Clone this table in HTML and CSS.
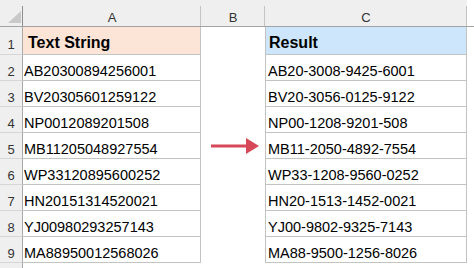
FILE: index.html
```html
<!DOCTYPE html>
<html>
<head>
<meta charset="utf-8">
<link rel="stylesheet" href="styles.css">
</head>
<body>
<div class="sheet">
  <div class="hd corner"><svg class="tri" width="13" height="12" viewBox="0 0 13 12"><polygon points="13,0 13,12 0,12" fill="#c9c9c9"/></svg></div>
  <div class="hd col">A</div>
  <div class="hd col">B</div>
  <div class="hd col">C</div>
  <div class="hd rest"></div>

  <div class="rn first">1</div>
  <div class="cell a first title peach">Text String</div>
  <div class="cell b"></div>
  <div class="cell c first title blue">Result</div>
  <div class="cell r"></div>

  <div class="rn">2</div><div class="cell a">AB20300894256001</div><div class="cell b"></div><div class="cell c">AB20-3008-9425-6001</div><div class="cell r"></div>
  <div class="rn">3</div><div class="cell a">BV20305601259122</div><div class="cell b"></div><div class="cell c">BV20-3056-0125-9122</div><div class="cell r"></div>
  <div class="rn">4</div><div class="cell a">NP0012089201508</div><div class="cell b"></div><div class="cell c">NP00-1208-9201-508</div><div class="cell r"></div>
  <div class="rn">5</div><div class="cell a">MB11205048927554</div><div class="cell b arrow"><svg width="48" height="16" viewBox="0 0 48 16"><rect x="0" y="6.5" width="38" height="3" fill="#d64858"/><polygon points="35,0 48,8 35,16" fill="#d64858"/></svg></div><div class="cell c">MB11-2050-4892-7554</div><div class="cell r"></div>
  <div class="rn">6</div><div class="cell a">WP33120895600252</div><div class="cell b"></div><div class="cell c">WP33-1208-9560-0252</div><div class="cell r"></div>
  <div class="rn">7</div><div class="cell a">HN20151314520021</div><div class="cell b"></div><div class="cell c">HN20-1513-1452-0021</div><div class="cell r"></div>
  <div class="rn">8</div><div class="cell a">YJ00980293257143</div><div class="cell b"></div><div class="cell c">YJ00-9802-9325-7143</div><div class="cell r"></div>
  <div class="rn">9</div><div class="cell a">MA88950012568026</div><div class="cell b"></div><div class="cell c">MA88-9500-1256-8026</div><div class="cell r"></div>

  <div class="rn last"></div><div class="blank"></div><div class="blank"></div><div class="blank"></div><div class="blank"></div>
</div>
</body>
</html>
```
FILE: styles.css
```css
html, body {
  margin: 0;
  padding: 0;
  background: #ffffff;
}
.sheet {
  width: 474px;
  height: 268px;
  overflow: hidden;
  display: grid;
  grid-template-columns: 23px 178px 64px 202px 1fr;
  grid-template-rows: 27px 28px repeat(8, 26px) 1fr;
  font-family: "Liberation Sans", Arial, sans-serif;
  color: #000;
}
.hd {
  box-sizing: border-box;
  background: linear-gradient(#c4c4c4, #c4c4c4) right bottom / 1px 20px no-repeat, #efefef;
  border-bottom: 1px solid #a3a3a3;
  font-size: 13px;
  color: #333;
  text-align: center;
  padding-top: 10px;
}
.hd.corner {
  background: linear-gradient(#8e8e8e, #8e8e8e) right bottom / 1px 20px no-repeat, #efefef;
  position: relative;
  padding: 0;
}
.tri {
  position: absolute;
  left: 8px;
  top: 11px;
}
.hd.rest {
  background: #ffffff;
  border-bottom: 1px solid #a3a3a3;
}
.rn {
  box-sizing: border-box;
  background: #efefef;
  border-right: 1px solid #a9a9a9;
  border-bottom: 1px solid #d6d6d6;
  font-size: 13px;
  color: #333;
  text-align: center;
  padding-top: 9px;
}
.rn.first {
  padding-top: 10px;
}
.rn.last {
  border-bottom: none;
}
.cell {
  box-sizing: border-box;
  font-size: 14.5px;
  padding-top: 8px;
  white-space: nowrap;
  overflow: hidden;
}
.cell.a {
  border-right: 1px solid #c3c3c3;
  border-bottom: 1px solid #c3c3c3;
  padding-left: 1px;
}
.cell.c {
  border-left: 1px solid #c3c3c3;
  border-right: 1px solid #c3c3c3;
  border-bottom: 1px solid #c3c3c3;
  padding-left: 2px;
}
.cell.first {
  padding-top: 7px;
}
.title {
  font-weight: bold;
  font-size: 16px;
}
.cell.a.title {
  padding-left: 5px;
}
.cell.c.title {
  padding-left: 3px;
}
.peach {
  background: #fce4d6;
}
.blue {
  background: #cde6fb;
}
.cell.b.arrow {
  padding: 0 0 0 10px;
  display: flex;
  align-items: center;
}
.blank {
  background: #ffffff;
}
```
